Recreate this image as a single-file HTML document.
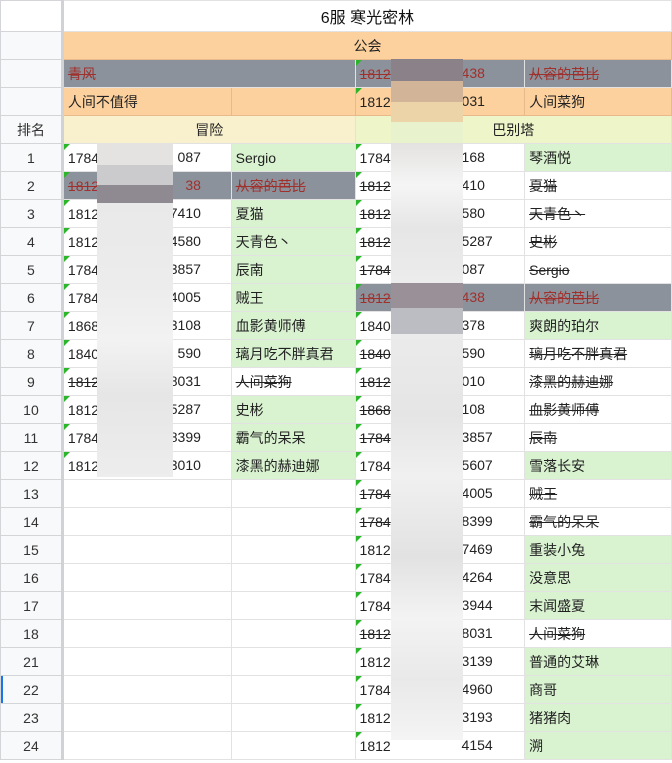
<!DOCTYPE html>
<html><head><meta charset="utf-8"><style>
*{box-sizing:border-box;margin:0;padding:0}
body{width:672px;height:763px;overflow:hidden;background:#fff;font-family:"Liberation Sans","Noto Sans CJK SC",sans-serif;font-size:14px;color:#222;position:relative}
table{border-collapse:collapse;table-layout:fixed;position:absolute;left:0;top:0}
td{border:1px solid #e2e2e2;padding:0 4px;white-space:nowrap;overflow:hidden;position:relative;height:28px}
td.h{background:#f8f9fa;text-align:center;border-color:#d3d5d8;border-right:3px solid #d0d2d5;color:#333}
.c{text-align:center}
.g{background:#d9f2d0}
.x{background:#8c929b;color:#a0302c;text-decoration:line-through}
.o{background:#fdd19e;border-color:#e8b98a}
.s{text-decoration:line-through}
.t::before{content:"";position:absolute;left:0;top:0;border-top:6px solid #2bb52b;border-right:6px solid transparent}
.sf{position:absolute;left:0;width:137px;text-align:right;top:0;line-height:27px}
.r .sf{left:106px;width:auto;text-align:left}
.bl{position:absolute}
</style></head><body>
<table>
<colgroup><col style="width:62px"><col style="width:169px"><col style="width:124px"><col style="width:170px"><col style="width:147px"></colgroup>
<tr style="height:31px"><td class="h" style="background:#fff;height:31px"></td><td colspan="4" class="c" style="font-size:16px;color:#111">6服 寒光密林</td></tr>
<tr><td class="h"></td><td colspan="4" class="c o">公会</td></tr>
<tr><td class="h"></td><td colspan="2" class="x">青风</td><td class="x t r">1812<span class="sf">438</span></td><td class="x">从容的芭比</td></tr>
<tr><td class="h"></td><td class="o">人间不值得</td><td class="o"></td><td class="o t r">1812<span class="sf">031</span></td><td class="o">人间菜狗</td></tr>
<tr><td class="h">排名</td><td colspan="2" class="c" style="background:#f9f0cd">冒险</td><td colspan="2" class="c" style="background:#eef5c9">巴别塔</td></tr>
<tr><td class="h">1</td><td class="t">1784<span class="sf">087</span></td><td class="g">Sergio</td><td class="t r">1784<span class="sf">168</span></td><td class="g">琴酒悦</td></tr>
<tr><td class="h">2</td><td class="x t">1812<span class="sf">38</span></td><td class="x">从容的芭比</td><td class="s t r">1812<span class="sf">410</span></td><td class="s">夏猫</td></tr>
<tr><td class="h">3</td><td class="t">1812<span class="sf">7410</span></td><td class="g">夏猫</td><td class="s t r">1812<span class="sf">580</span></td><td class="s">天青色丶</td></tr>
<tr><td class="h">4</td><td class="t">1812<span class="sf">4580</span></td><td class="g">天青色丶</td><td class="s t r">1812<span class="sf">5287</span></td><td class="s">史彬</td></tr>
<tr><td class="h">5</td><td class="t">1784<span class="sf">3857</span></td><td class="g">辰南</td><td class="s t r">1784<span class="sf">087</span></td><td class="s">Sergio</td></tr>
<tr><td class="h">6</td><td class="t">1784<span class="sf">4005</span></td><td class="g">贼王</td><td class="x t r">1812<span class="sf">438</span></td><td class="x">从容的芭比</td></tr>
<tr><td class="h">7</td><td class="t">1868<span class="sf">3108</span></td><td class="g">血影黄师傅</td><td class="t r">1840<span class="sf">378</span></td><td class="g">爽朗的珀尔</td></tr>
<tr><td class="h">8</td><td class="t">1840<span class="sf">590</span></td><td class="g">璃月吃不胖真君</td><td class="s t r">1840<span class="sf">590</span></td><td class="s">璃月吃不胖真君</td></tr>
<tr><td class="h">9</td><td class="s t">1812<span class="sf">8031</span></td><td class="s">人间菜狗</td><td class="s t r">1812<span class="sf">010</span></td><td class="s">漆黑的赫迪娜</td></tr>
<tr><td class="h">10</td><td class="t">1812<span class="sf">5287</span></td><td class="g">史彬</td><td class="s t r">1868<span class="sf">108</span></td><td class="s">血影黄师傅</td></tr>
<tr><td class="h">11</td><td class="t">1784<span class="sf">8399</span></td><td class="g">霸气的呆呆</td><td class="s t r">1784<span class="sf">3857</span></td><td class="s">辰南</td></tr>
<tr><td class="h">12</td><td class="t">1812<span class="sf">3010</span></td><td class="g">漆黑的赫迪娜</td><td class="t r">1784<span class="sf">5607</span></td><td class="g">雪落长安</td></tr>
<tr><td class="h">13</td><td></td><td></td><td class="s t r">1784<span class="sf">4005</span></td><td class="s">贼王</td></tr>
<tr><td class="h">14</td><td></td><td></td><td class="s t r">1784<span class="sf">8399</span></td><td class="s">霸气的呆呆</td></tr>
<tr><td class="h">15</td><td></td><td></td><td class="t r">1812<span class="sf">7469</span></td><td class="g">重装小兔</td></tr>
<tr><td class="h">16</td><td></td><td></td><td class="t r">1784<span class="sf">4264</span></td><td class="g">没意思</td></tr>
<tr><td class="h">17</td><td></td><td></td><td class="t r">1784<span class="sf">3944</span></td><td class="g">末闻盛夏</td></tr>
<tr><td class="h">18</td><td></td><td></td><td class="s t r">1812<span class="sf">8031</span></td><td class="s">人间菜狗</td></tr>
<tr><td class="h">21</td><td></td><td></td><td class="t r">1812<span class="sf">3139</span></td><td class="g">普通的艾琳</td></tr>
<tr><td class="h" style="box-shadow:inset 2px 0 0 #1a73e8">22</td><td></td><td></td><td class="t r">1784<span class="sf">4960</span></td><td class="g">商哥</td></tr>
<tr><td class="h">23</td><td></td><td></td><td class="t r">1812<span class="sf">3193</span></td><td class="g">猪猪肉</td></tr>
<tr><td class="h">24</td><td></td><td></td><td class="t r">1812<span class="sf">4154</span></td><td class="g">溯</td></tr>
</table>
<div class="bl" style="left:97px;top:143px;width:76px;height:22px;background:#e4e3e1"></div>
<div class="bl" style="left:97px;top:165px;width:76px;height:20px;background:#cbcbcd"></div>
<div class="bl" style="left:97px;top:185px;width:76px;height:18px;background:#8f8a92"></div>
<div class="bl" style="left:97px;top:203px;width:76px;height:274px;background:linear-gradient(#e9e9e9,#ececec 30%,#f2f2f2 50%,#e6e6e6 70%,#ededed)"></div>
<div class="bl" style="left:391px;top:59px;width:72px;height:22px;background:#8a8189"></div>
<div class="bl" style="left:391px;top:81px;width:72px;height:21px;background:#d2b598"></div>
<div class="bl" style="left:391px;top:102px;width:72px;height:20px;background:#edd4a8"></div>
<div class="bl" style="left:391px;top:122px;width:72px;height:21px;background:#e8f2cc"></div>
<div class="bl" style="left:391px;top:143px;width:72px;height:140px;background:linear-gradient(#e3e2e0,#f5f5f5 30%,#e6e6e6 60%,#ececec)"></div>
<div class="bl" style="left:391px;top:283px;width:72px;height:25px;background:#9a9098"></div>
<div class="bl" style="left:391px;top:308px;width:72px;height:26px;background:#bcbdc2"></div>
<div class="bl" style="left:391px;top:334px;width:72px;height:406px;background:linear-gradient(#ebebeb,#e5e5e5 20%,#f0f0f0 35%,#e2e2e2 55%,#f3f3f3 70%,#e9e9e9 85%,#f4f4f4)"></div>
</body></html>
